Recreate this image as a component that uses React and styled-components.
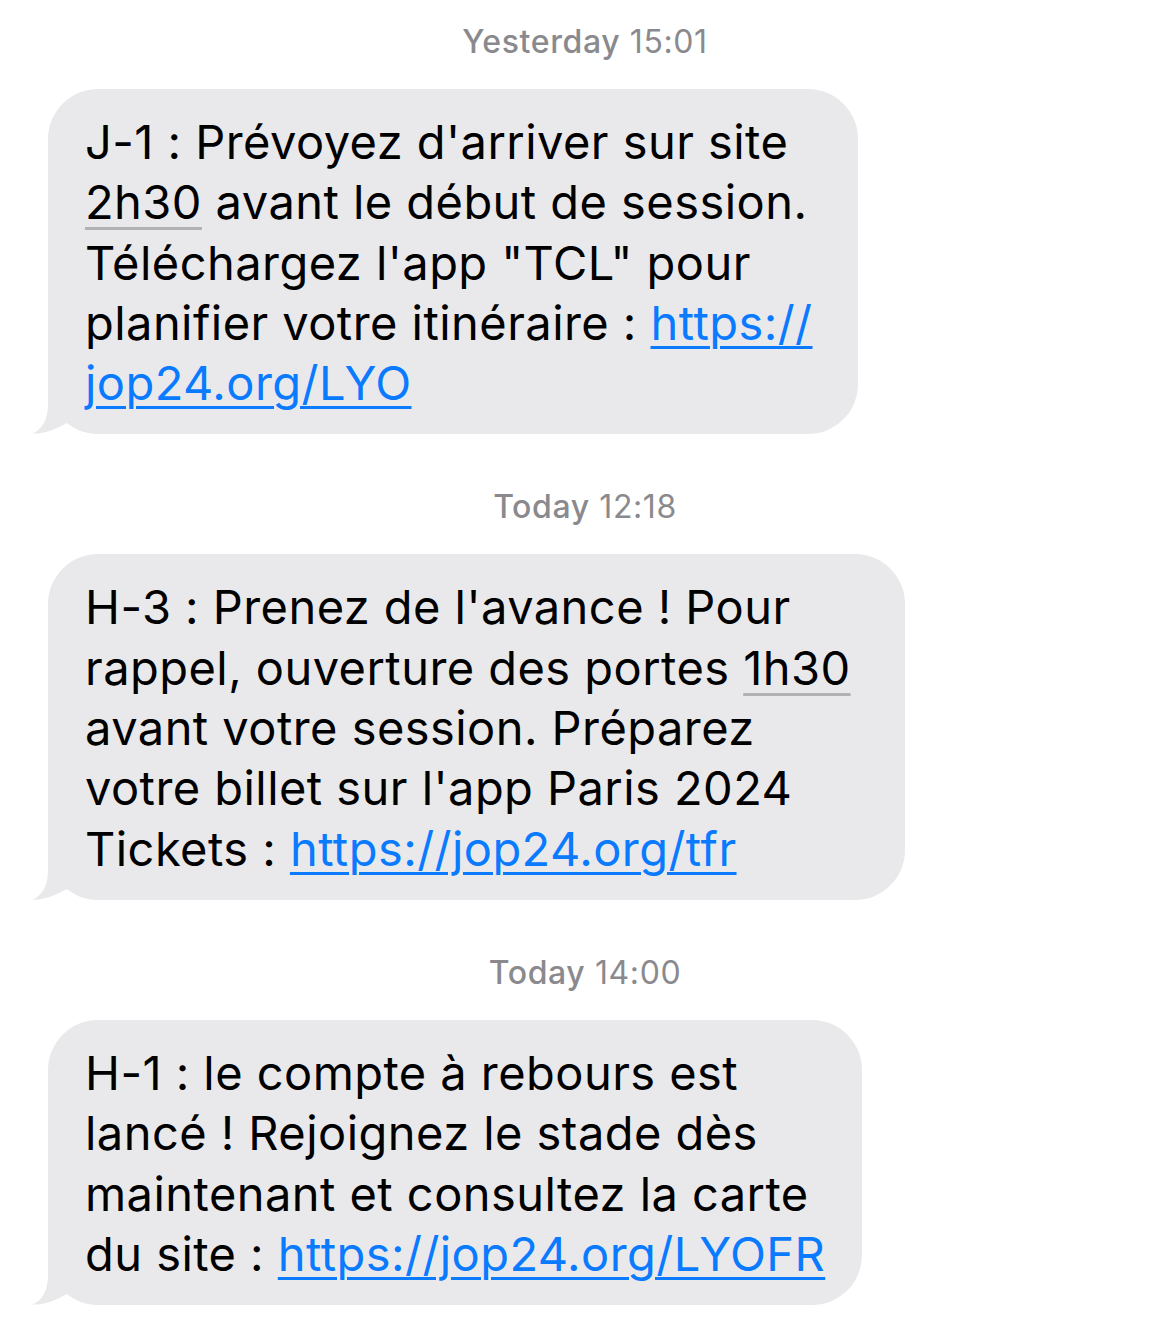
import React from 'react';
import styled, { createGlobalStyle } from 'styled-components';

const GlobalStyle = createGlobalStyle`
  html, body {
    margin: 0;
    padding: 0;
    background: #ffffff;
  }
`;

const Thread = styled.main`
  width: 1170px;
  padding: 22px 0 40px;
  display: flex;
  flex-direction: column;
  align-items: flex-start;
  font-family: Inter, 'Liberation Sans', sans-serif;
  box-sizing: border-box;
`;

const Stamp = styled.div`
  align-self: stretch;
  text-align: center;
  font-size: 32px;
  line-height: 40px;
  color: #8a8a8e;
  margin: ${props => (props.first ? '0 0 27px' : '53px 0 27px')};
  letter-spacing: 0.6px;
`;

const Day = styled.span`
  font-weight: 500;
`;

const Time = styled.span`
  font-weight: 400;
`;

const Bubble = styled.div`
  position: relative;
  margin-left: 48px;
  width: ${props => props.width}px;
  box-sizing: border-box;
  padding: 23px 20px 21px 37px;
  background: #e9e9eb;
  border-radius: 50px;
  font-size: 47px;
  letter-spacing: 0.45px;
  line-height: 60.3px;
  color: #000000;
  white-space: nowrap;
`;

const Tail = styled.svg`
  position: absolute;
  left: -17px;
  bottom: 0;
  width: 40px;
  height: 50px;
  fill: #e9e9eb;
`;

const Line = styled.div``;

const Hint = styled.span`
  text-decoration: underline;
  text-decoration-color: #b2b2b6;
  text-decoration-thickness: 3px;
  text-underline-offset: 8px;
`;

const Link = styled.a`
  color: #0a7aff;
  text-decoration: underline;
  text-decoration-thickness: 3px;
  text-underline-offset: 6px;
`;

const BubbleTail = () => (
  <Tail viewBox="0 0 40 50">
    <path d="M17 0 L17 20 C17 36 11 46 1 49.5 C12 50.5 25 45 36 39 L40 0 Z" />
  </Tail>
);

const App = () => (
  <>
    <GlobalStyle />
    <Thread>
      <Stamp first>
        <Day>Yesterday</Day> <Time>15:01</Time>
      </Stamp>
      <Bubble width={810}>
        <Line>J-1 : Prévoyez d'arriver sur site</Line>
        <Line><Hint>2h30</Hint> avant le début de session.</Line>
        <Line>Téléchargez l'app "TCL" pour</Line>
        <Line>planifier votre itinéraire : <Link href="#">https://</Link></Line>
        <Line><Link href="#">jop24.org/LYO</Link></Line>
        <BubbleTail />
      </Bubble>

      <Stamp>
        <Day>Today</Day> <Time>12:18</Time>
      </Stamp>
      <Bubble width={857}>
        <Line>H-3 : Prenez de l'avance ! Pour</Line>
        <Line>rappel, ouverture des portes <Hint>1h30</Hint></Line>
        <Line>avant votre session. Préparez</Line>
        <Line>votre billet sur l'app Paris 2024</Line>
        <Line>Tickets : <Link href="#">https://jop24.org/tfr</Link></Line>
        <BubbleTail />
      </Bubble>

      <Stamp>
        <Day>Today</Day> <Time>14:00</Time>
      </Stamp>
      <Bubble width={814}>
        <Line>H-1 : le compte à rebours est</Line>
        <Line>lancé ! Rejoignez le stade dès</Line>
        <Line>maintenant et consultez la carte</Line>
        <Line>du site : <Link href="#">https://jop24.org/LYOFR</Link></Line>
        <BubbleTail />
      </Bubble>
    </Thread>
  </>
);

export default App;
